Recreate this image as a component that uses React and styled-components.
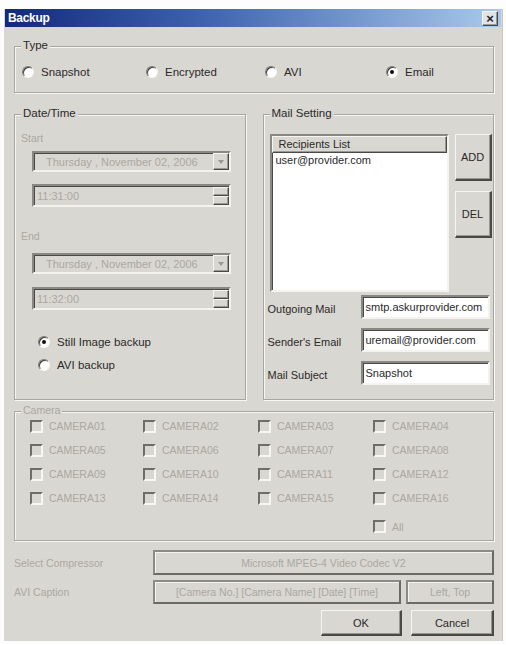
import styled, { createGlobalStyle, css } from "styled-components";

const FACE = "#d9d7d1";
const DIM = "#aaa8a2";
const INK = "#2a2a2a";

const GlobalStyle = createGlobalStyle`
    body {
        margin: 0;
        background: #fdfdfd;
        font-family: "Liberation Sans", Arial, sans-serif;
        font-size: 11.5px;
        color: ${INK};
    }
`;

const sunken = css`
    border: 2px solid;
    border-color: #8a8884 #f4f3f0 #f4f3f0 #8a8884;
    box-shadow: inset 1px 1px 0 #4a4946;
`;

const raised = css`
    border: 1px solid;
    border-color: #f6f5f2 #4a4946 #4a4946 #f6f5f2;
    box-shadow: inset -1px -1px 0 #9a9893;
`;

const Window = styled.div`
    margin: 9px 0 0 4px;
    width: 499px;
    height: 632px;
    background: ${FACE};
    border-right: 1px solid #c9c7c2;
    box-sizing: border-box;
    display: flex;
    flex-direction: column;
`;

const TitleBar = styled.div`
    height: 18px;
    margin: 0 1px;
    display: flex;
    align-items: center;
    justify-content: space-between;
    padding: 0 3px;
    background: linear-gradient(90deg, #12297a 0%, #3f63ad 40%, #a9c9ec 100%);
`;

const Title = styled.span`
    color: #fff;
    font-weight: bold;
    font-size: 12px;
    letter-spacing: -0.3px;
`;

const CloseBox = styled.span`
    ${raised};
    width: 14px;
    height: 13px;
    background: #dfe3ea;
    display: flex;
    align-items: center;
    justify-content: center;
    font-size: 13px;
    font-weight: bold;
    line-height: 1;
    color: #222;
`;

const Body = styled.div`
    padding: 19px 8px 0 10px;
    display: flex;
    flex-direction: column;
`;

const Group = styled.div`
    position: relative;
    box-sizing: border-box;
    height: ${(p) => p.$h}px;
    width: ${(p) => (p.$w ? `${p.$w}px` : "auto")};
    margin-top: ${(p) => p.$mt || 0}px;
    border: 1px solid #a8a6a0;
    box-shadow: inset 1px 1px 0 #f7f6f3, 1px 1px 0 #f7f6f3;
`;

const Legend = styled.span`
    position: absolute;
    top: -8px;
    left: 6px;
    padding: 0 2px;
    background: ${FACE};
    color: ${(p) => (p.$off ? DIM : INK)};
    font-size: ${(p) => (p.$off ? "10.5px" : "11.5px")};
`;

const TypeRow = styled.div`
    display: grid;
    grid-template-columns: 124px 119px 121px auto;
    padding: 18px 0 0 7px;
`;

const RadioLabel = styled.label`
    display: flex;
    align-items: center;
    gap: 7px;
    height: 14px;
`;

const Dot = styled.span`
    width: 10px;
    height: 10px;
    border-radius: 50%;
    background: #fff;
    border: 1px solid;
    border-color: #7c7a76 #f7f6f3 #f7f6f3 #7c7a76;
    box-shadow: inset 1px 1px 0 #3d3c3a;
    display: flex;
    align-items: center;
    justify-content: center;
    &::after {
        content: "";
        width: 4px;
        height: 4px;
        border-radius: 50%;
        background: ${(p) => (p.$on ? "#111" : "transparent")};
    }
`;

const Radio = ({ on, children }) => (
    <RadioLabel>
        <Dot $on={on} />
        {children}
    </RadioLabel>
);

const Middle = styled.div`
    display: flex;
    gap: 17px;
    margin-top: 21px;
`;

const DateCol = styled.div`
    display: flex;
    flex-direction: column;
    padding: 0 0 0 6px;
`;

const Caption = styled.span`
    color: ${DIM};
    font-size: 10.5px;
    height: 13px;
    margin-top: ${(p) => p.$mt}px;
`;

const Field = styled.div`
    ${sunken};
    box-sizing: border-box;
    width: ${(p) => p.$w}px;
    height: ${(p) => p.$h || 22}px;
    margin: ${(p) => p.$mt || 0}px 0 0 ${(p) => p.$ml || 0}px;
    background: ${(p) => (p.$white ? "#fff" : FACE)};
    color: ${(p) => (p.$white ? INK : DIM)};
    display: flex;
    align-items: center;
    padding-left: 3px;
    font-size: 11px;
    white-space: nowrap;
    overflow: hidden;
`;

const FieldText = styled.span`
    flex: 1;
    padding-left: ${(p) => p.$pl || 0}px;
`;

const DropBtn = styled.span`
    ${raised};
    width: 14px;
    height: 15px;
    background: ${FACE};
    display: flex;
    align-items: center;
    justify-content: center;
    &::after {
        content: "";
        border: 3px solid transparent;
        border-top: 4px solid #9a9893;
        margin-top: 4px;
    }
`;

const Spin = styled.span`
    display: flex;
    flex-direction: column;
    width: 16px;
    height: 18px;
`;

const SpinHalf = styled.span`
    ${raised};
    flex: 1;
    background: ${FACE};
`;

const Combo = ({ text, mt }) => (
    <Field $w={199} $h={21} $mt={mt} $ml={11}>
        <FieldText $pl={9}>{text}</FieldText>
        <DropBtn />
    </Field>
);

const TimeBox = ({ text, mt }) => (
    <Field $w={199} $h={23} $mt={mt} $ml={11}>
        <FieldText>{text}</FieldText>
        <Spin>
            <SpinHalf />
            <SpinHalf />
        </Spin>
    </Field>
);

const RadioStack = styled.div`
    display: flex;
    flex-direction: column;
    gap: 9px;
    margin: 25px 0 0 17px;
`;

const MailTop = styled.div`
    display: flex;
    gap: 6px;
    padding: 19px 0 0 6px;
`;

const ListBox = styled.div`
    ${sunken};
    box-sizing: border-box;
    width: 179px;
    height: 158px;
    background: #fff;
`;

const ListHead = styled.div`
    ${raised};
    height: 15px;
    background: ${FACE};
    padding-left: 6px;
    line-height: 15px;
    font-size: 11px;
`;

const ListItem = styled.div`
    padding: 1px 0 0 4px;
    font-size: 11px;
`;

const SideBtns = styled.div`
    display: flex;
    flex-direction: column;
    gap: 10px;
`;

const Button = styled.button`
    ${raised};
    box-sizing: border-box;
    width: ${(p) => p.$w}px;
    height: ${(p) => p.$h}px;
    background: ${FACE};
    font-family: inherit;
    font-size: 11px;
    color: ${INK};
    padding: 0;
    border-right-width: 2px;
    border-bottom-width: 2px;
`;

const MailForm = styled.div`
    display: grid;
    grid-template-columns: 93px 129px;
    grid-auto-rows: 24px;
    row-gap: 9px;
    align-items: center;
    margin: 3px 0 0 4px;
`;

const FormLabel = styled.span`
    font-size: 11px;
    padding-top: 4px;
`;

const CameraGrid = styled.div`
    display: grid;
    grid-template-columns: 113px 115px 115px 100px;
    grid-auto-rows: 16px;
    row-gap: 8px;
    padding: 6px 0 0 15px;
`;

const CheckLabel = styled.label`
    display: flex;
    align-items: center;
    gap: 6px;
    color: ${DIM};
    font-size: 10.5px;
    grid-column: ${(p) => p.$col || "auto"};
    margin-top: ${(p) => p.$mt || 0}px;
`;

const Box = styled.span`
    width: 9px;
    height: 9px;
    background: ${FACE};
    border: 2px solid;
    border-color: #6f6d69 #f7f6f3 #f7f6f3 #6f6d69;
`;

const Check = ({ col, mt, children }) => (
    <CheckLabel $col={col} $mt={mt}>
        <Box />
        {children}
    </CheckLabel>
);

const Row = styled.div`
    display: flex;
    align-items: center;
    gap: ${(p) => p.$gap || 0}px;
    margin-top: ${(p) => p.$mt}px;
    justify-content: ${(p) => (p.$end ? "flex-end" : "flex-start")};
`;

const RowLabel = styled.span`
    width: 139px;
    color: ${DIM};
    font-size: 10.5px;
`;

const DimBtn = styled.div`
    box-sizing: border-box;
    width: ${(p) => p.$w}px;
    height: ${(p) => p.$h}px;
    border: 2px solid #6c6a66;
    border-top-color: #8d8b87;
    border-left-color: #8d8b87;
    box-shadow: inset 1px 1px 0 #f4f3f0;
    color: ${DIM};
    font-size: 10.5px;
    display: flex;
    align-items: center;
    justify-content: center;
    margin-left: ${(p) => p.$ml || 0}px;
`;

const cameras = Array.from({ length: 16 }, (_, i) => `CAMERA${String(i + 1).padStart(2, "0")}`);

export default function App() {
    return (
        <>
            <GlobalStyle />
            <Window>
                <TitleBar>
                    <Title>Backup</Title>
                    <CloseBox>×</CloseBox>
                </TitleBar>
                <Body>
                    <Group $h={47}>
                        <Legend>Type</Legend>
                        <TypeRow>
                            <Radio>Snapshot</Radio>
                            <Radio>Encrypted</Radio>
                            <Radio>AVI</Radio>
                            <Radio on>Email</Radio>
                        </TypeRow>
                    </Group>

                    <Middle>
                        <Group $h={286} $w={232}>
                            <Legend>Date/Time</Legend>
                            <DateCol>
                                <Caption $mt={17}>Start</Caption>
                                <Combo text="Thursday  , November 02, 2006" mt={6} />
                                <TimeBox text="11:31:00" mt={12} />
                                <Caption $mt={23}>End</Caption>
                                <Combo text="Thursday  , November 02, 2006" mt={10} />
                                <TimeBox text="11:32:00" mt={13} />
                                <RadioStack>
                                    <Radio on>Still Image backup</Radio>
                                    <Radio>AVI backup</Radio>
                                </RadioStack>
                            </DateCol>
                        </Group>

                        <Group $h={286} $w={232}>
                            <Legend>Mail Setting</Legend>
                            <MailTop>
                                <ListBox>
                                    <ListHead>Recipients List</ListHead>
                                    <ListItem>user@provider.com</ListItem>
                                </ListBox>
                                <SideBtns>
                                    <Button $w={37} $h={47}>ADD</Button>
                                    <Button $w={37} $h={47}>DEL</Button>
                                </SideBtns>
                            </MailTop>
                            <MailForm>
                                <FormLabel>Outgoing Mail</FormLabel>
                                <Field $w={129} $h={24} $white>smtp.askurprovider.com</Field>
                                <FormLabel>Sender's Email</FormLabel>
                                <Field $w={129} $h={24} $white>uremail@provider.com</Field>
                                <FormLabel>Mail Subject</FormLabel>
                                <Field $w={129} $h={24} $white>Snapshot</Field>
                            </MailForm>
                        </Group>
                    </Middle>

                    <Group $h={130} $mt={11}>
                        <Legend $off>Camera</Legend>
                        <CameraGrid>
                            {cameras.map((c) => (
                                <Check key={c}>{c}</Check>
                            ))}
                            <Check col={4} mt={9}>All</Check>
                        </CameraGrid>
                    </Group>

                    <Row $mt={9}>
                        <RowLabel>Select Compressor</RowLabel>
                        <DimBtn $w={342} $h={25}>Microsoft MPEG-4 Video Codec V2</DimBtn>
                    </Row>
                    <Row $mt={5}>
                        <RowLabel>AVI Caption</RowLabel>
                        <DimBtn $w={249} $h={24}>[Camera No.] [Camera Name] [Date] [Time]</DimBtn>
                        <DimBtn $w={88} $h={24} $ml={5}>Left, Top</DimBtn>
                    </Row>
                    <Row $mt={6} $end $gap={9}>
                        <Button $w={81} $h={26}>OK</Button>
                        <Button $w={83} $h={26}>Cancel</Button>
                    </Row>
                </Body>
            </Window>
        </>
    );
}
